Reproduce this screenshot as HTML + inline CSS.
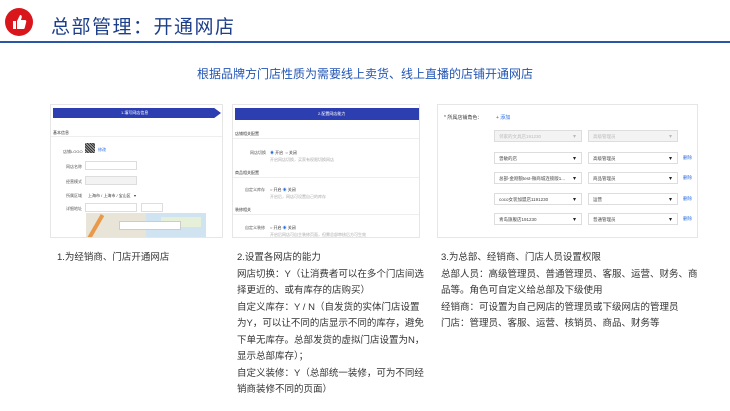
<!DOCTYPE html>
<html><head><meta charset="utf-8"><style>
*{margin:0;padding:0;box-sizing:border-box}
body{width:730px;height:411px;background:#fff;position:relative;overflow:hidden;font-family:"Liberation Sans","Noto Sans CJK SC",sans-serif;color:#333}
.abs{position:absolute}
.t{font-size:4px;color:#555;white-space:nowrap}
.col{position:absolute;top:250px;font-size:9.5px;line-height:16.5px;color:#333}
.sel{position:absolute;height:12px;border:1px solid #ddd;background:#fff;font-size:4.5px;color:#444;padding:3px 4px;}
.sel:after{content:"▾";position:absolute;right:5px;top:2px;font-size:6px;color:#222}
.dis{background:#f3f3f3;color:#bbb}
.dis:after{color:#bbb}
.del{position:absolute;font-size:4.5px;color:#2a6ae0}
</style></head><body>
<div class="abs" style="left:5px;top:8px;width:28px;height:28px;border-radius:50%;background:#d9161c"></div>
<svg class="abs" style="left:10px;top:13px" width="18" height="18" viewBox="0 0 18 18"><path d="M3 8h3v8H3z M7 8l3-6c1.5 0 2 1 1.7 2.5L11 7h4c1 0 1.5 1 1.2 2l-1.5 6c-.2.7-.8 1-1.5 1H7z" fill="#fff"/></svg>
<div class="abs" style="left:51px;top:12px;font-size:19px;color:#1d3f8a;letter-spacing:1.5px">总部管理：开通网店</div>
<div class="abs" style="left:0;top:41px;width:730px;height:2px;background:#2a56a8"></div>
<div class="abs" style="left:0;top:65px;width:730px;text-align:center;font-size:12px;color:#2356b5">根据品牌方门店性质为需要线上卖货、线上直播的店铺开通网店</div>

<!-- shot 1 -->
<div class="abs" style="left:50px;top:104px;width:173px;height:134px;border:1px solid #e6e6e6;overflow:hidden;background:#fff">
 <div class="abs" style="left:2px;top:3px;width:168px;height:10px;background:#2d3fb0;clip-path:polygon(0 0,96% 0,100% 50%,96% 100%,0 100%)"></div>
 <div class="abs t" style="left:70px;top:5px;color:#fff">1.填写网店信息</div>
 <div class="abs t" style="left:2px;top:25px;color:#333">基本信息</div>
 <div class="abs" style="left:0;top:31px;width:173px;height:1px;background:#eee"></div>
 <div class="abs t" style="left:12px;top:44px">店铺LOGO</div>
 <div class="abs" style="left:34px;top:38px;width:10px;height:10px;background:repeating-linear-gradient(45deg,#333 0 1px,#aaa 1px 2px)"></div>
 <div class="abs t" style="left:47px;top:42px;color:#2a6ae0">修改</div>
 <div class="abs t" style="left:15px;top:59px">网店名称</div>
 <div class="abs" style="left:34px;top:56px;width:52px;height:9px;border:1px solid #ddd"></div>
 <div class="abs t" style="left:15px;top:74px">经营模式</div>
 <div class="abs" style="left:34px;top:71px;width:52px;height:9px;border:1px solid #ddd;background:#f3f3f3"></div>
 <div class="abs t" style="left:15px;top:88px">所属区域</div>
 <div class="abs t" style="left:37px;top:88px;color:#333">上海市 / 上海市 / 宝山区 &nbsp; ▾</div>
 <div class="abs t" style="left:15px;top:101px">详细地址</div>
 <div class="abs" style="left:34px;top:98px;width:52px;height:9px;border:1px solid #ddd"></div>
 <div class="abs" style="left:90px;top:98px;width:22px;height:9px;border:1px solid #ddd"></div>
 <div class="abs" style="left:35px;top:108px;width:120px;height:30px;background:#cfe3f0"></div>
 <div class="abs" style="left:35px;top:108px;width:60px;height:30px;background:#e9e4d8"></div>
 <div class="abs" style="left:110px;top:112px;width:40px;height:10px;background:#e6efd8"></div>
 <div class="abs" style="left:68px;top:116px;width:62px;height:9px;background:#fff;border:1px solid #ccc"></div>
 <div class="abs" style="left:42px;top:108px;width:4px;height:30px;background:#e89a4a;transform:rotate(30deg)"></div>
</div>

<!-- shot 2 -->
<div class="abs" style="left:232px;top:104px;width:188px;height:134px;border:1px solid #e6e6e6;overflow:hidden;background:#fff">
 <div class="abs" style="left:2px;top:3px;width:186px;height:12px;background:#2d3fb0"></div>
 <div class="abs t" style="left:85px;top:6px;color:#fff">2.配置网店能力</div>
 <div class="abs t" style="left:2px;top:26px;color:#333">店铺相关配置</div>
 <div class="abs" style="left:0;top:33px;width:188px;height:1px;background:#eee"></div>
 <div class="abs t" style="left:17px;top:45px">网店切换</div>
 <div class="abs t" style="left:37px;top:45px;color:#333"><span style="color:#2a6ae0">◉</span> 开启 &nbsp;○ 关闭</div>
 <div class="abs t" style="left:37px;top:52px;color:#aaa">开启网店切换，买家有权限切换网店</div>
 <div class="abs t" style="left:2px;top:65px;color:#333">商品相关配置</div>
 <div class="abs" style="left:0;top:72px;width:188px;height:1px;background:#eee"></div>
 <div class="abs t" style="left:12px;top:82px">自定义库存</div>
 <div class="abs t" style="left:37px;top:82px;color:#333">○ 开启 <span style="color:#2a6ae0">◉</span> 关闭</div>
 <div class="abs t" style="left:37px;top:89px;color:#aaa">开启后，网店可设置自己的库存</div>
 <div class="abs t" style="left:2px;top:102px;color:#333">装修相关</div>
 <div class="abs" style="left:0;top:109px;width:188px;height:1px;background:#eee"></div>
 <div class="abs t" style="left:12px;top:120px">自定义装修</div>
 <div class="abs t" style="left:37px;top:120px;color:#333">○ 开启 <span style="color:#2a6ae0">◉</span> 关闭</div>
 <div class="abs t" style="left:37px;top:127px;color:#aaa">开启后网店可自主装修页面，但需总部审核后方可生效</div>
</div>

<!-- shot 3 -->
<div class="abs" style="left:437px;top:104px;width:261px;height:134px;border:1px solid #e6e6e6;background:#fff">
 <div class="abs" style="left:6px;top:9px;font-size:5px;color:#444">* 所属店铺角色：</div>
 <div class="abs" style="left:58px;top:9px;font-size:5px;color:#2a6ae0">+ 添加</div>
 <div class="sel dis" style="left:56px;top:25px;width:88px">邻家的文具店191230</div>
 <div class="sel dis" style="left:150px;top:25px;width:90px">高级管理员</div>
 <div class="sel" style="left:56px;top:47px;width:88px">曾敏的店</div>
 <div class="sel" style="left:150px;top:47px;width:90px">高级管理员</div><div class="del" style="left:245px;top:50px">删除</div>
 <div class="sel" style="left:56px;top:67px;width:88px">总部-金刚狼test-微商城连锁版1...</div>
 <div class="sel" style="left:150px;top:67px;width:90px">商品管理员</div><div class="del" style="left:245px;top:70px">删除</div>
 <div class="sel" style="left:56px;top:88px;width:88px">coco女装加盟店1191230</div>
 <div class="sel" style="left:150px;top:88px;width:90px">运营</div><div class="del" style="left:245px;top:91px">删除</div>
 <div class="sel" style="left:56px;top:108px;width:88px">青岛旗舰店191230</div>
 <div class="sel" style="left:150px;top:108px;width:90px">普通管理员</div><div class="del" style="left:245px;top:111px">删除</div>
</div>

<div class="col" style="left:57px">1.为经销商、门店开通网店</div>
<div class="col" style="left:237px;white-space:nowrap">2.设置各网店的能力<br>网店切换：Y（让消费者可以在多个门店间选<br>择更近的、或有库存的店购买）<br>自定义库存：Y / N（自发货的实体门店设置<br>为Y，可以让不同的店显示不同的库存，避免<br>下单无库存。总部发货的虚拟门店设置为N，<br>显示总部库存）；<br>自定义装修：Y（总部统一装修，可为不同经<br>销商装修不同的页面）</div>
<div class="col" style="left:441px;width:258px">3.为总部、经销商、门店人员设置权限<br>总部人员：高级管理员、普通管理员、客服、运营、财务、商品等。角色可自定义给总部及下级使用<br>经销商：可设置为自己网店的管理员或下级网店的管理员<br>门店：管理员、客服、运营、核销员、商品、财务等</div>
</body></html>
